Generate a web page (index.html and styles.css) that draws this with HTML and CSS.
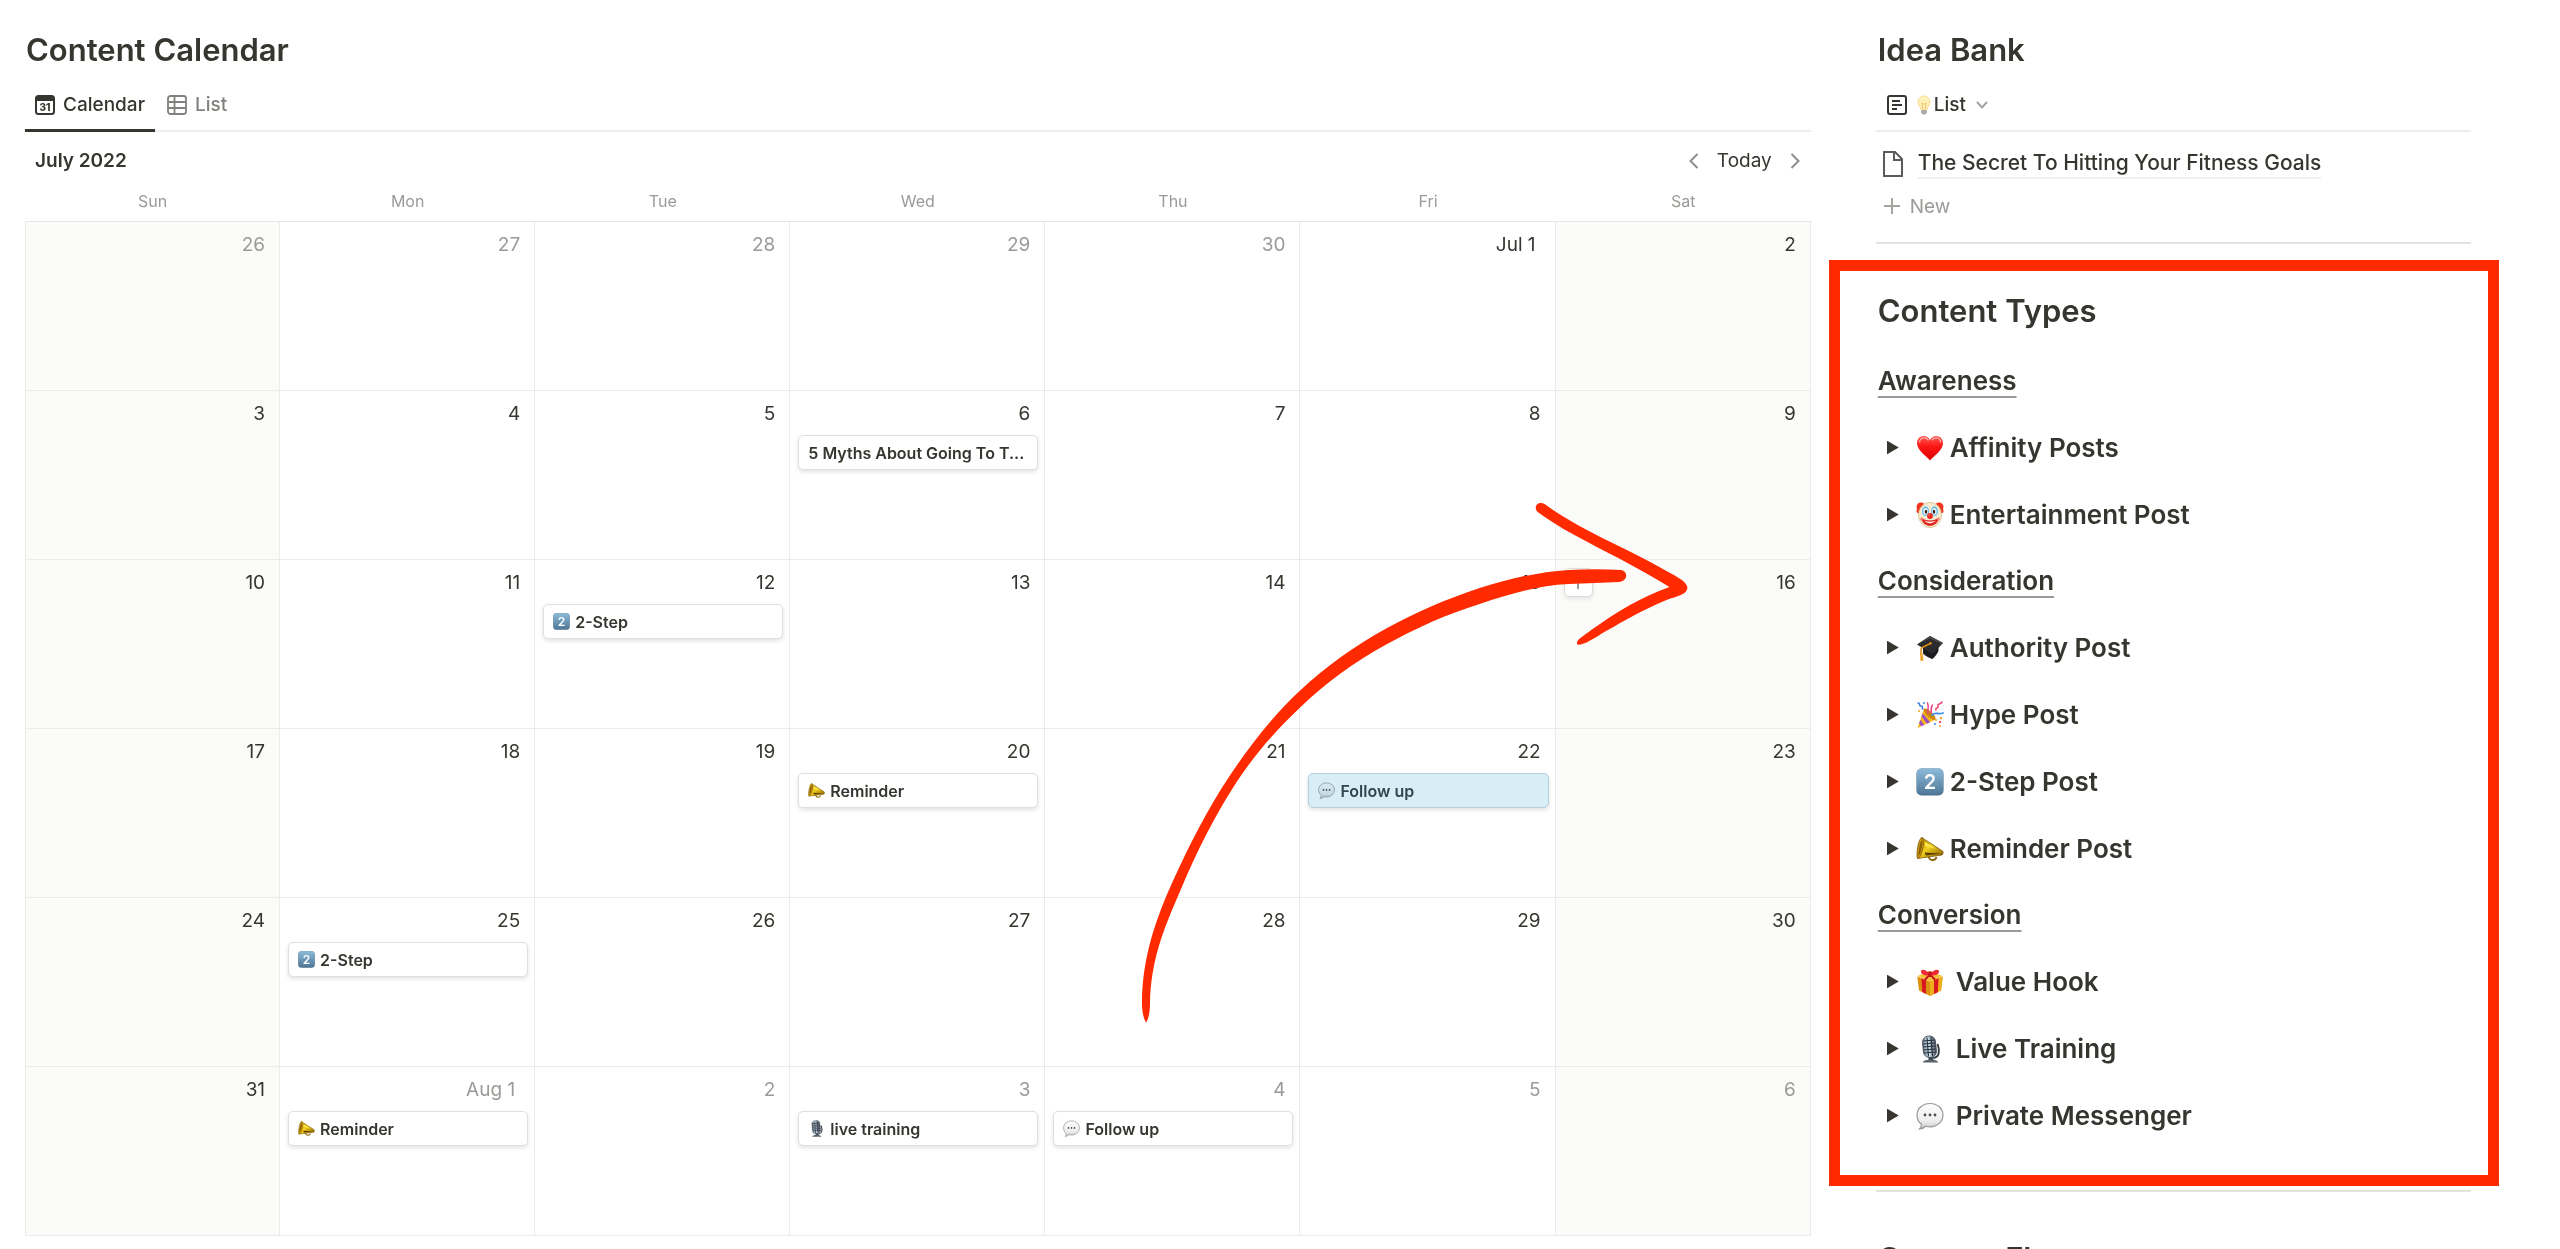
FILE: index.html
```
<!DOCTYPE html>
<html lang="en">
<head>
  <meta charset="UTF-8">
  <meta name="viewport" content="width=device-width, initial-scale=1.0">
  <title>Content Calendar</title>
  <link rel="stylesheet" href="styles.css">
</head>
<body>
  <!-- Shared emoji drawings -->
  <svg class="sprite" aria-hidden="true">
    <defs>
      <linearGradient id="gHeart" x1="0" y1="0" x2="0" y2="1">
        <stop offset="0" stop-color="#ff5a52"/><stop offset=".45" stop-color="#fb1414"/><stop offset="1" stop-color="#d90404"/>
      </linearGradient>
      <linearGradient id="gKey" x1="0" y1="0" x2="0" y2="1">
        <stop offset="0" stop-color="#8cbbd9"/><stop offset="1" stop-color="#517898"/>
      </linearGradient>
      <linearGradient id="gGold" x1="0" y1="0" x2="1" y2="1">
        <stop offset="0" stop-color="#a87400"/><stop offset=".45" stop-color="#f2cf1d"/><stop offset="1" stop-color="#7d5200"/>
      </linearGradient>
      <linearGradient id="gBubble" x1="0" y1="0" x2="0" y2="1">
        <stop offset="0" stop-color="#fdfdfd"/><stop offset=".7" stop-color="#ededee"/><stop offset="1" stop-color="#c4c4c6"/>
      </linearGradient>
      <linearGradient id="gMic" x1="0" y1="0" x2="1" y2="0">
        <stop offset="0" stop-color="#6f7f8e"/><stop offset=".4" stop-color="#d5e8f5"/><stop offset="1" stop-color="#4c5560"/>
      </linearGradient>
    </defs>
    <symbol id="heart" viewBox="0 0 28 28">
      <path d="M14 26.500C12.500 23.500 1 17 1 9.200 1 4.800 4 2 7.600 2c2.700 0 5 1.400 6.400 3.900C15.400 3.400 17.700 2 20.400 2 24 2 27 4.800 27 9.200 27 17 15.500 23.500 14 26.500z" fill="url(#gHeart)"/>
      <path d="M3.500 8c.4-2.700 2.200-4.200 4.600-4.200 1.800 0 3.200.9 4 2.200M16.200 5.800c1-1.300 2.300-2 4-2 2.200 0 4 1.400 4.400 4" fill="none" stroke="#ffb0aa" stroke-width="1.200" stroke-linecap="round"/>
    </symbol>
    <symbol id="clown" viewBox="0 0 28 28">
      <circle cx="5" cy="6" r="4.500" fill="#f0361f"/><circle cx="23" cy="6" r="4.500" fill="#f0361f"/>
      <circle cx="2.800" cy="10" r="2.400" fill="#f0361f"/><circle cx="25.200" cy="10" r="2.400" fill="#f0361f"/>
      <ellipse cx="14" cy="14" rx="11.500" ry="12.600" fill="#f6ead0" stroke="#d6bf86" stroke-width=".8"/>
      <ellipse cx="9.500" cy="10.200" rx="3.500" ry="4.900" fill="#6fbfe8"/><ellipse cx="18.500" cy="10.200" rx="3.500" ry="4.900" fill="#6fbfe8"/>
      <ellipse cx="9.700" cy="10.500" rx="2.200" ry="3.300" fill="#fff"/><ellipse cx="18.300" cy="10.500" rx="2.200" ry="3.300" fill="#fff"/>
      <ellipse cx="10" cy="10.800" rx="1.300" ry="2" fill="#35221a"/><ellipse cx="18" cy="10.800" rx="1.300" ry="2" fill="#35221a"/>
      <path d="M5 16.500c1 5.500 4.500 8.300 9 8.300s8-2.800 9-8.300c-2.500 2-5.500 3-9 3s-6.500-1-9-3z" fill="#e3231b"/>
      <path d="M8.200 19.800c1.600 1.700 3.500 2.400 5.800 2.400s4.200-.7 5.800-2.400c-3.700 1.200-7.900 1.200-11.600 0z" fill="#fff"/>
      <circle cx="14" cy="15" r="2.900" fill="#e8271c"/><circle cx="13.200" cy="14" r=".8" fill="#ff8d80"/>
      <circle cx="5.700" cy="18" r="1.500" fill="#ef7b6d"/><circle cx="22.300" cy="18" r="1.500" fill="#ef7b6d"/>
    </symbol>
    <symbol id="cap" viewBox="0 0 28 28">
      <path d="M7 12v7.500c2.500 2.800 7 4.800 9.500 5.500 2.200-2 5-5.500 6-8V10z" fill="#1c1c1e"/>
      <path d="M1 10.500 14 2l13 7-10.500 11z" fill="#2b2b2e"/><path d="M1 10.500 14 2l13 7-1 1.300L14 4.500z" fill="#48484c"/>
      <path d="M14.500 9.500 6.200 13.500C5.300 14 5 15 5 16v5" fill="none" stroke="#d98b12" stroke-width="1.500"/>
      <path d="M4.200 19h2.200l1.300 7.500-3.300.5z" fill="#f0a52a"/><circle cx="14.500" cy="9.300" r="1.300" fill="#d98b12"/>
    </symbol>
    <symbol id="party" viewBox="0 0 28 28">
      <path d="M1.500 27 8 8c4.500 1.500 9.500 6 11.500 10.500z" fill="#f7b613"/>
      <path d="M6.600 12.300 14 21.300l-3 1.500-5.500-7.300zM4.300 18.700l4 5.300-3 1.300-2.200-3z" fill="#9b4fc8"/>
      <ellipse cx="13.700" cy="13.200" rx="2.700" ry="7.700" transform="rotate(-47 13.700 13.200)" fill="#c8860c"/>
      <path d="M12 12c-1-4 1.500-5-.5-10M15 12c1-4-1-5 1.500-8" fill="none" stroke="#ef3f8b" stroke-width="1.500" stroke-linecap="round"/>
      <path d="M16 14c3-3.500 6 0 11-2" fill="none" stroke="#3d8fe8" stroke-width="1.800" stroke-linecap="round"/>
      <path d="M2 2c3 0 0 3 3 3s0 3 2 3" fill="none" stroke="#3b7be0" stroke-width="1.500" stroke-linecap="round"/>
      <path d="M20 9c-1-3 3-1 2-4s3-1 4-4" fill="none" stroke="#ee4a76" stroke-width="1.600" stroke-linecap="round"/>
      <g fill="#f5a623"><circle cx="20" cy="19" r="1"/><circle cx="25" cy="17" r="1.200"/><circle cx="3" cy="10" r="1"/><circle cx="24" cy="25" r="1"/></g>
      <g fill="#3d8fe8"><circle cx="19" cy="23" r="1.100"/><circle cx="8" cy="2" r="1"/></g><circle cx="24" cy="21" r="1.200" fill="#ee4a76"/>
    </symbol>
    <symbol id="key" viewBox="0 0 28 28">
      <rect x=".5" y=".5" width="27" height="27" rx="5" fill="#49708f"/>
      <rect x=".8" y=".5" width="26.400" height="25.800" rx="4.800" fill="url(#gKey)"/>
    </symbol>
    <symbol id="horn" viewBox="0 0 28 28">
      <path d="M13 20.500c-1 5 6 6.500 7.500 1.500" fill="none" stroke="#8a6205" stroke-width="1.800"/>
      <path d="M6 2.500C9 5 23 13.500 26.500 16c1 1 .8 3.300-.5 4L1.800 23.500z" fill="url(#gGold)" stroke="#80590a" stroke-width=".8"/>
      <path d="M6 2.500C2.200 3-.4 22 1.800 23.500 5 23 9.500 8 6 2.500z" fill="#d8a513" stroke="#80590a" stroke-width=".9"/>
      <path d="M5.700 5C3.500 7 1.800 19 2.500 21.500 4.500 19 7.500 9 5.700 5z" fill="#8c6104"/>
      <path d="M8.500 17.500 25 18.500 10 20.500z" fill="#5f4003"/><path d="M9 7l11 7-11-3z" fill="#ffe74e"/>
    </symbol>
    <symbol id="gift" viewBox="0 0 28 28">
      <path d="M1.500 8.500 14 13.500 26.500 8.500V11L25 22.500 14 28 3 22.500 1.500 11z" fill="#dc9410"/>
      <path d="M14 13.500 26.500 8.500V11L25 22.500 14 28z" fill="#f0af1d"/>
      <path d="M1.500 8 14 3l12.500 5L14 13.500z" fill="#f6c03b"/>
      <path d="M5.500 10.200 10 12v14L6.200 24zM18 12l4.500-1.800-.7 14L18 26z" fill="#d81a20"/>
      <path d="M14 7C10 8 5.500 7 5 4S9.500.5 14 6.500C18.500.5 23.500 1 23 4s-5 4-9 3z" fill="#ee2a38"/>
      <path d="M14 7C11 9 10 11 9 11.500M14 7c3 2 4 4 5 4.500" fill="none" stroke="#c4121c" stroke-width="2"/><circle cx="14" cy="5.500" r="2.300" fill="#c9151f"/>
    </symbol>
    <symbol id="mic" viewBox="0 0 28 28">
      <path d="M21.500 9c2.500 7 2 13-4 14" fill="none" stroke="#333b43" stroke-width="1.800"/>
      <rect x="7" y="1" width="13" height="21.500" rx="6" transform="rotate(-6 13.500 12)" fill="url(#gMic)" stroke="#39424b" stroke-width=".8"/>
      <path d="M7 6l11.500-1M6.800 9l12.500-1M7 12l12.500-1M7.300 15l12.500-1M8 18l12-1M11 2.500l1.500 19M15 2l1.500 19" stroke="#28323d" stroke-width="1.200"/>
      <path d="M12.500 22h5v3h-5z" fill="#404950"/><path d="M7 27.500c0-2 3-2.800 7.500-2.800s7.500.8 7.500 2.800z" fill="#59636c"/>
    </symbol>
    <symbol id="bubble" viewBox="0 0 28 28">
      <path d="M14 1.500c7.200 0 13 5 13 11.500S21.200 24.800 14 24.800c-1.500 0-3-.2-4.300-.6C8.200 25.600 6 26.800 3.500 27c1.300-1.200 2-3 2-4.700C2.700 20.200 1 16.800 1 13 1 6.500 6.800 1.500 14 1.500z" fill="url(#gBubble)" stroke="#98989c" stroke-width="1.200"/>
      <g fill="#4b4b50"><circle cx="9" cy="13" r="1.400"/><circle cx="14" cy="13" r="1.400"/><circle cx="19" cy="13" r="1.400"/></g>
    </symbol>
    <symbol id="bulb" viewBox="0 0 14 20">
      <path d="M7 1c3.500 0 6 2.600 6 6 0 3.200-2.600 4.500-3 8H4c-.4-3.500-3-4.800-3-8 0-3.400 2.500-6 6-6z" fill="#fff0b8" stroke="#f3d588" stroke-width=".8"/>
      <path d="M5.700 14.500 5 8l2 1.500L9 8l-.7 6.500" fill="none" stroke="#e9b95a" stroke-width=".8"/>
      <path d="M4.200 15h5.600v3L8 19.500H6L4.200 18z" fill="#a9a9a7"/>
    </symbol>
  </svg>

  <main class="page">
    <section class="calendar">
      <h2>Content Calendar</h2>
      <div class="tabs">
        <button class="tab active">
          <svg class="view-icon" viewBox="0 0 20 20"><rect x="1" y="1" width="18" height="18" rx="2.500" fill="none" stroke="currentColor" stroke-width="2"/><path d="M1 1h18v5H1z" fill="currentColor"/><text x="10" y="15.500" text-anchor="middle" font-family="Inter, sans-serif" font-size="10" font-weight="800" fill="currentColor">31</text></svg>
          Calendar
        </button>
        <button class="tab">
          <svg class="view-icon" viewBox="0 0 20 20" fill="none" stroke="currentColor" stroke-width="1.800"><rect x="1" y="1" width="18" height="18" rx="2.500"/><path d="M1 7h18M1 13h18M7.500 1v18"/></svg>
          List
        </button>
      </div>
      <div class="toolbar">
        <span class="month">July 2022</span>
        <div class="nav">
          <button aria-label="Previous month"><svg viewBox="0 0 10 16"><path d="M8.500 1 1.500 8l7 7"/></svg></button>
          <button>Today</button>
          <button aria-label="Next month"><svg viewBox="0 0 10 16"><path d="M1.500 1l7 7-7 7"/></svg></button>
        </div>
      </div>

      <div class="month-grid">
        <table>
          <thead>
            <tr><th>Sun</th><th>Mon</th><th>Tue</th><th>Wed</th><th>Thu</th><th>Fri</th><th>Sat</th></tr>
          </thead>
          <tbody>
            <tr class="dim">
              <td><div class="day">26</div></td>
              <td><div class="day">27</div></td>
              <td><div class="day">28</div></td>
              <td><div class="day">29</div></td>
              <td><div class="day">30</div></td>
              <td class="current"><div class="day first">Jul 1</div></td>
              <td class="current"><div class="day">2</div></td>
            </tr>
            <tr>
              <td><div class="day">3</div></td>
              <td><div class="day">4</div></td>
              <td><div class="day">5</div></td>
              <td><div class="day">6</div><a class="event" href="#"><span>5 Myths About Going To T...</span></a></td>
              <td><div class="day">7</div></td>
              <td><div class="day">8</div></td>
              <td><div class="day">9</div></td>
            </tr>
            <tr>
              <td><div class="day">10</div></td>
              <td><div class="day">11</div></td>
              <td><div class="day">12</div><a class="event" href="#"><svg viewBox="0 0 28 28"><use href="#key"/><text class="digit" x="14" y="21">2</text></svg><span>2-Step</span></a></td>
              <td><div class="day">13</div></td>
              <td><div class="day">14</div></td>
              <td><div class="day">15</div></td>
              <td><div class="day"><button class="add" aria-label="Add item"><svg viewBox="0 0 16 16"><path d="M8 1v14M1 8h14"/></svg></button>16</div></td>
            </tr>
            <tr>
              <td><div class="day">17</div></td>
              <td><div class="day">18</div></td>
              <td><div class="day">19</div></td>
              <td><div class="day">20</div><a class="event" href="#"><svg><use href="#horn"/></svg><span>Reminder</span></a></td>
              <td><div class="day">21</div></td>
              <td><div class="day">22</div><a class="event selected" href="#"><svg><use href="#bubble"/></svg><span>Follow up</span></a></td>
              <td><div class="day">23</div></td>
            </tr>
            <tr>
              <td><div class="day">24</div></td>
              <td><div class="day">25</div><a class="event" href="#"><svg viewBox="0 0 28 28"><use href="#key"/><text class="digit" x="14" y="21">2</text></svg><span>2-Step</span></a></td>
              <td><div class="day">26</div></td>
              <td><div class="day">27</div></td>
              <td><div class="day">28</div></td>
              <td><div class="day">29</div></td>
              <td><div class="day">30</div></td>
            </tr>
            <tr class="dim">
              <td class="current"><div class="day">31</div></td>
              <td><div class="day first">Aug 1</div><a class="event" href="#"><svg><use href="#horn"/></svg><span>Reminder</span></a></td>
              <td><div class="day">2</div></td>
              <td><div class="day">3</div><a class="event" href="#"><svg><use href="#mic"/></svg><span>live training</span></a></td>
              <td><div class="day">4</div><a class="event" href="#"><svg><use href="#bubble"/></svg><span>Follow up</span></a></td>
              <td><div class="day">5</div></td>
              <td><div class="day">6</div></td>
            </tr>
          </tbody>
        </table>

        <!-- Hand drawn arrow -->
        <svg class="arrow" viewBox="1132 496 572 534" aria-hidden="true">
          <path d="M1622 569C1604 568 1587 568 1569 569C1539 571 1509 578 1480 587C1447 598 1416 611 1386 628C1355 645 1326 666 1300 690C1271 717 1245 751 1222 787C1201 821 1183 857 1167 894C1154 925 1142 961 1142 1003C1142 1012 1144 1019 1146 1022C1149 1018 1150 1010 1150 1003C1151 960 1163 930 1180 891C1197 850 1215 815 1235 784C1255 753 1276 730 1300 707C1326 682 1355 661 1386 644C1416 627 1448 613 1480 603C1511 593 1540 584 1569 583C1587 582 1604 582 1620 581C1628 580 1629 571 1622 569Z"/>
          <path d="M1545 503C1580 529 1631 549 1667 570C1678 576 1688 581 1688 587C1687 594 1678 595 1667 599C1643 609 1624 620 1607 630C1595 637 1586 644 1578 644C1575 640 1583 636 1592 629C1615 612 1642 596 1670 586C1638 566 1604 550 1573 533C1560 526 1549 519 1538 511C1533 505 1539 500 1545 503Z"/>
        </svg>
      </div>
    </section>

    <aside class="sidebar">
      <h2>Idea Bank</h2>
      <div class="tabs">
        <button class="tab plain">
          <svg class="view-icon" viewBox="0 0 20 20" fill="none" stroke="currentColor" stroke-width="2"><rect x="1" y="1" width="18" height="18" rx="2"/><path d="M5 6h8M5 10h10M5 14h5"/></svg>
          <span class="bulb-label"><svg class="bulb"><use href="#bulb"/></svg>List</span>
          <svg class="chevron" viewBox="0 0 12 8"><path d="M1 1l5 5.500L11 1"/></svg>
        </button>
      </div>
      <div class="ideas">
        <a class="idea" href="#">
          <svg viewBox="0 0 20 26"><path d="M1 1h11l7 7v17H1zM11 1v8h8"/></svg>
          <span>The Secret To Hitting Your Fitness Goals</span>
        </a>
        <button class="new"><svg viewBox="0 0 18 18"><path d="M9 1v16M1 9h16"/></svg>New</button>
      </div>
      <hr>

      <section class="types">
        <h2>Content Types</h2>
        <h3><u>Awareness</u></h3>
        <ul>
          <li><button class="toggle" aria-label="Open Affinity Posts"></button><svg><use href="#heart"/></svg><span>Affinity Posts</span></li>
          <li><button class="toggle" aria-label="Open Entertainment Post"></button><svg><use href="#clown"/></svg><span>Entertainment Post</span></li>
        </ul>
        <h3><u>Consideration</u></h3>
        <ul>
          <li><button class="toggle" aria-label="Open Authority Post"></button><svg><use href="#cap"/></svg><span>Authority Post</span></li>
          <li><button class="toggle" aria-label="Open Hype Post"></button><svg><use href="#party"/></svg><span>Hype Post</span></li>
          <li><button class="toggle" aria-label="Open 2-Step Post"></button><svg viewBox="0 0 28 28"><use href="#key"/><text class="digit" x="14" y="21">2</text></svg><span>2-Step Post</span></li>
          <li><button class="toggle" aria-label="Open Reminder Post"></button><svg><use href="#horn"/></svg><span>Reminder Post</span></li>
        </ul>
        <h3><u>Conversion</u></h3>
        <ul class="spaced">
          <li><button class="toggle" aria-label="Open Value Hook"></button><svg><use href="#gift"/></svg><span>Value Hook</span></li>
          <li><button class="toggle" aria-label="Open Live Training"></button><svg><use href="#mic"/></svg><span>Live Training</span></li>
          <li><button class="toggle" aria-label="Open Private Messenger"></button><svg><use href="#bubble"/></svg><span>Private Messenger</span></li>
        </ul>
      </section>

      <hr class="after-types">
      <h2>Content Flow</h2>
    </aside>
  </main>
</body>
</html>
```
FILE: styles.css
```
* {
  box-sizing: border-box;
}

body {
  margin: 0;
  height: 100vh;
  overflow: hidden;
  background: #fff;
  color: #37352f;
  font-family: Inter, "Liberation Sans", sans-serif;
  font-size: 19px;
}

button {
  padding: 0;
  border: none;
  background: none;
  color: inherit;
  font: inherit;
  cursor: pointer;
}

a {
  color: inherit;
  text-decoration: none;
}

svg {
  flex: none;
}

.sprite {
  position: absolute;
  width: 0;
  height: 0;
}

.digit {
  fill: #fff;
  font-size: 20px;
  font-weight: 600;
  text-anchor: middle;
}

.page {
  display: grid;
  grid-template-columns: 3fr 1fr;
  column-gap: 65px;
  padding: 25px 89px 0 25px;
}

.calendar,
.sidebar {
  min-width: 0;
}

h2 {
  margin: 0;
  padding-left: 1px;
  font-size: 31px;
  font-weight: 600;
  line-height: 50px;
}

.sidebar h2 {
  padding-left: 2px;
}

/* Tabs */
.tabs {
  display: flex;
  gap: 2px;
  height: 57px;
  border-bottom: 2px solid #ededeb;
}

.tab {
  display: flex;
  align-items: center;
  gap: 8px;
  height: 57px;
  padding: 5px 10px 0;
  border-bottom: 3px solid transparent;
  color: #82817d;
  font-weight: 500;
}

.tab.active {
  border-color: #37352f;
  color: #37352f;
}

.tab.plain {
  gap: 10px;
  padding-left: 11px;
  color: #37352f;
}

.view-icon {
  width: 20px;
  height: 20px;
}

.bulb-label {
  display: flex;
  align-items: center;
  gap: 3px;
}

.bulb {
  width: 14px;
  height: 20px;
}

.chevron {
  width: 12px;
  height: 8px;
  fill: none;
  stroke: #a5a4a1;
  stroke-width: 2;
}

/* Toolbar above the month */
.toolbar {
  display: flex;
  justify-content: space-between;
  align-items: center;
  height: 57px;
  padding: 0 11px 0 10px;
}

.month {
  font-weight: 600;
}

.nav {
  display: flex;
  align-items: center;
  gap: 18px;
}

.nav svg {
  display: block;
  width: 10px;
  height: 16px;
  fill: none;
  stroke: #8f8e8a;
  stroke-width: 2;
}

/* Month grid */
.month-grid {
  position: relative;
}

table {
  width: 100%;
  table-layout: fixed;
  border-collapse: separate;
  border-spacing: 0;
}

th {
  padding: 0 0 8px;
  border-bottom: 1px solid #e6e6e4;
  color: #9b9a97;
  font-size: 16px;
  font-weight: 400;
  line-height: 24px;
}

td {
  height: 169px;
  padding: 0 6px 0 8px;
  border-right: 1px solid #ebebe9;
  border-bottom: 1px solid #ebebe9;
  vertical-align: top;
}

td:first-child {
  border-left: 1px solid #ebebe9;
}

td:first-child,
td:last-child {
  background: #fbfbfa;
}

.day {
  display: flex;
  justify-content: flex-end;
  align-items: center;
  height: 44px;
  padding-right: 8px;
}

.day.first {
  padding-right: 13px;
}

.dim {
  color: #9b9a97;
}

.dim .current,
.dim .event {
  color: #37352f;
}

.add {
  display: flex;
  justify-content: center;
  align-items: center;
  width: 29px;
  height: 29px;
  margin-right: auto;
  border: 1px solid #dddddb;
  border-radius: 5px;
  background: #fff;
  box-shadow: 0 2px 4px rgba(15, 15, 15, 0.1);
}

.add svg {
  width: 16px;
  height: 16px;
  stroke: #9b9a97;
  stroke-width: 2;
}

.event {
  display: flex;
  align-items: center;
  gap: 5px;
  height: 35px;
  padding: 0 9px;
  border: 1px solid #dfdfdd;
  border-radius: 5px;
  background: #fff;
  box-shadow: 0 2px 4px rgba(15, 15, 15, 0.12);
  font-size: 16px;
  font-weight: 600;
  white-space: nowrap;
}

.event svg {
  width: 17px;
  height: 17px;
}

.event span {
  overflow: hidden;
  text-overflow: ellipsis;
}

.event.selected {
  border-color: #b3d0de;
  background: #d8edf6;
  color: #304650;
}

.event.selected svg {
  mix-blend-mode: multiply;
}

.arrow {
  position: absolute;
  top: 308px;
  left: 62%;
  width: 32%;
  fill: #ff2a00;
}

/* Idea bank */
.ideas {
  display: flex;
  flex-direction: column;
  gap: 2px;
  padding: 12px 0 16px 7px;
}

.idea {
  display: flex;
  align-items: center;
  gap: 15px;
  height: 40px;
  font-size: 21px;
  font-weight: 500;
}

.idea svg {
  width: 20px;
  height: 26px;
  fill: none;
  stroke: #5c5b57;
  stroke-width: 2;
}

.idea span {
  border-bottom: 2px solid #efefed;
  line-height: 28px;
}

.new {
  display: flex;
  align-items: center;
  gap: 9px;
  height: 40px;
  color: #9b9a97;
}

.new svg {
  width: 18px;
  height: 18px;
  stroke: #a5a4a1;
  stroke-width: 2;
}

hr {
  height: 2px;
  margin: 0 0 16px;
  border: none;
  background: #e2e2e0;
}

/* Highlighted block */
.types {
  margin: 0 -28px 0 -47px;
  padding: 15px 36px 26px;
  border: 11px solid #ff2a00;
}

.types h2 {
  margin-bottom: 12px;
}

.types h3 {
  margin: 0;
  padding-left: 2px;
  font-size: 26px;
  font-weight: 600;
  line-height: 66px;
}

.types u {
  text-decoration-color: #9b9a97;
  text-decoration-thickness: 2px;
  text-underline-offset: 6px;
}

.types ul {
  margin: 0;
  padding: 0 0 0 11px;
  list-style: none;
}

.types li {
  display: flex;
  align-items: center;
  gap: 6px;
  height: 67px;
  font-size: 26px;
  font-weight: 600;
}

.types .spaced li {
  gap: 12px;
}

.types li svg {
  width: 28px;
  height: 28px;
}

.toggle {
  width: 12px;
  height: 14px;
  margin-right: 11px;
  background: #37352f;
  clip-path: polygon(0 0, 100% 50%, 0 100%);
}

.types .spaced .toggle {
  margin-right: 5px;
}

.after-types {
  margin: 4px 0 42px;
}
```
